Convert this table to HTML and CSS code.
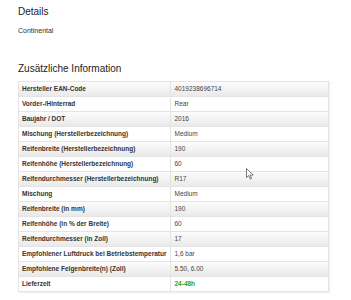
FILE: index.html
```html
<!DOCTYPE html>
<html lang="de">
<head>
<meta charset="utf-8">
<link rel="stylesheet" href="styles.css">
</head>
<body>
<main class="page">
  <h2 class="title">Details</h2>
  <p class="brand">Continental</p>
  <h2 class="title title-info">Zusätzliche Information</h2>
  <table class="specs">
    <tbody>
      <tr><th>Hersteller EAN-Code</th><td>4019238696714</td></tr>
      <tr><th>Vorder-/Hinterrad</th><td>Rear</td></tr>
      <tr><th>Baujahr / DOT</th><td>2016</td></tr>
      <tr><th>Mischung (Herstellerbezeichnung)</th><td>Medium</td></tr>
      <tr><th>Reifenbreite (Herstellerbezeichnung)</th><td>190</td></tr>
      <tr><th>Reifenhöhe (Herstellerbezeichnung)</th><td>60</td></tr>
      <tr><th>Reifendurchmesser (Herstellerbezeichnung)</th><td>R17</td></tr>
      <tr><th>Mischung</th><td>Medium</td></tr>
      <tr><th>Reifenbreite (in mm)</th><td>190</td></tr>
      <tr><th>Reifenhöhe (in % der Breite)</th><td>60</td></tr>
      <tr><th>Reifendurchmesser (in Zoll)</th><td>17</td></tr>
      <tr><th>Empfohlener Luftdruck bei Betriebstemperatur</th><td>1,6 bar</td></tr>
      <tr><th>Empfohlene Felgenbreite(n) (Zoll)</th><td>5.50, 6.00</td></tr>
      <tr><th>Lieferzeit</th><td class="delivery">24-48h</td></tr>
    </tbody>
  </table>
</main>
<svg class="cursor" width="8" height="12" viewBox="0 0 8 12"><path d="M0.5 0.5 L0.5 9.5 L2.8 7.5 L4.3 11 L5.6 10.4 L4.2 7 L7.2 7 Z" fill="#fff" stroke="#555" stroke-width="0.8" stroke-linejoin="round"/></svg>
</body>
</html>
```
FILE: styles.css
```css
html, body {
  margin: 0;
  padding: 0;
  background: #fff;
}
body {
  font-family: "Liberation Sans", Arial, sans-serif;
  color: #333;
  position: relative;
  width: 351px;
  height: 300px;
  overflow: hidden;
}
.page {
  padding: 6px 22px 0 18px;
}
.title {
  margin: 0;
  font-size: 10px;
  line-height: 12px;
  font-weight: normal;
  color: #222;
}
.brand {
  margin: 8px 0 0;
  font-size: 7px;
  line-height: 9px;
  color: #333;
}
.title-info {
  margin-top: 28px;
}
.specs {
  margin-top: 6px;
  width: 311px;
  border-collapse: collapse;
  border: 1px solid #e2e2e2;
  box-shadow: 1px 1px 2px rgba(0,0,0,0.08);
  font-size: 6.5px;
  line-height: 8px;
}
.specs tr {
  height: 15px;
}
.specs th, .specs td {
  border: 1px solid #e4e4e4;
  padding: 0 4px 0 3px;
  text-align: left;
  vertical-align: middle;
  white-space: nowrap;
}
.specs th {
  width: 143px;
  font-weight: bold;
  color: #333;
}
.specs td {
  color: #444;
}
.specs tr:nth-child(odd) {
  background: linear-gradient(#fcfcfc, #e8e8e8);
}
.specs tr:nth-child(even) {
  background: #fff;
}
.specs td.delivery {
  color: #2aa52a;
  font-weight: bold;
}
.cursor {
  position: absolute;
  left: 246px;
  top: 168px;
}
```
